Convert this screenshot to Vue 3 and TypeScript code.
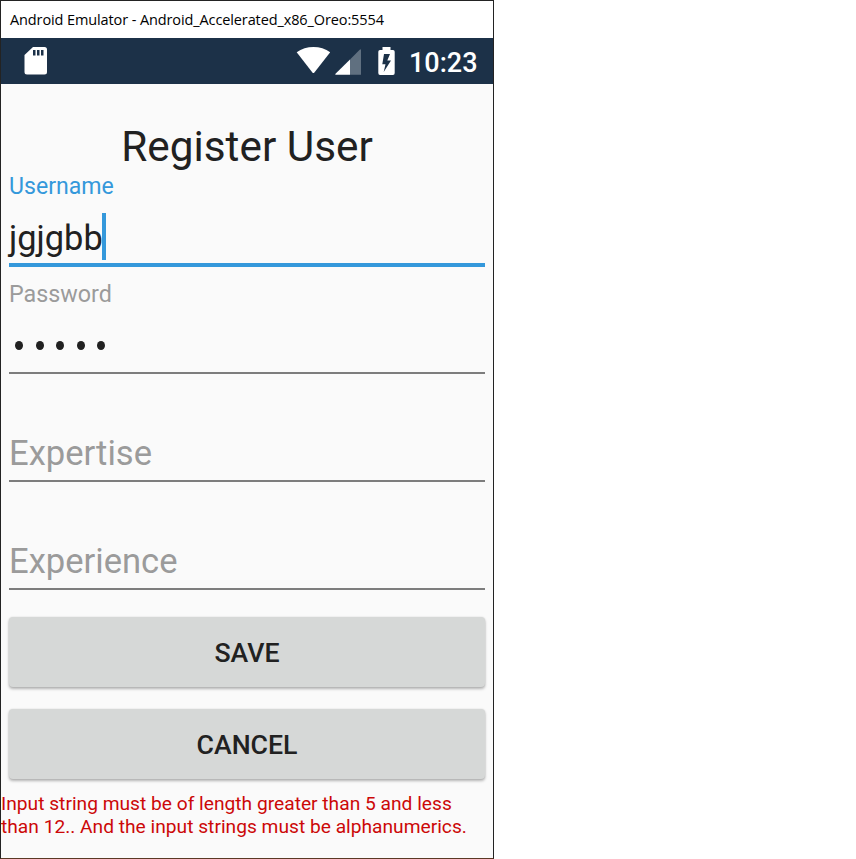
<script setup lang="ts">
import { ref } from 'vue'

interface Field {
  id: string
  label: string
  value: string
  state: 'focused' | 'secret' | 'empty'
}

const title = 'Android Emulator - Android_Accelerated_x86_Oreo:5554'
const fields = ref<Field[]>([
  { id: 'username', label: 'Username', value: 'jgjgbb', state: 'focused' },
  { id: 'password', label: 'Password', value: '•••••', state: 'secret' },
  { id: 'expertise', label: 'Expertise', value: '', state: 'empty' },
  { id: 'experience', label: 'Experience', value: '', state: 'empty' },
])
const errorLines = [
  'Input string must be of length greater than 5 and less',
  'than 12.. And the input strings must be alphanumerics.',
]
</script>

<template>
  <div class="window">
    <header class="titlebar"><span class="caption">{{ title }}</span></header>
    <div class="status">
      <svg class="sd" width="24" height="30" viewBox="0 0 24 30">
        <path fill="#fff" fill-rule="evenodd" d="M9 1H20.5Q23 1 23 3.500V26Q23 28.500 20.500 28.500H3Q.5 28.500 .5 26V9ZM9 4V9.500H11.500V4ZM13 4V9.500H15.500V4ZM17 4V9.500H19.500V4Z" />
      </svg>
      <svg class="signals" width="100" height="32" viewBox="296 46 100 32">
        <path fill="#fff" d="M296.700 52.300C306 45.300 321 45.300 330.200 52.300L314.400 72.600Q313.400 73.600 312.400 72.600Z" />
        <path fill="#607080" d="M361 50Q361 48.500 359.700 49.700L350 59.500V74.800H361Z" />
        <path fill="#fff" d="M350 59.500V74.800H336Q334.500 74.800 335.500 73.700Z" />
        <path fill="#fff" fill-rule="evenodd" d="M382.500 47H390.500V50H393Q394.700 50 394.700 51.700V73Q394.700 74.900 393 74.900H380Q378.300 74.900 378.300 73V51.700Q378.300 50 380 50H382.500ZM384 54L382.300 64.300H385.500L383.700 72L391 60.500H387.300L390 54Z" />
      </svg>
      <span class="clock">10:23</span>
    </div>
    <main class="screen">
      <h1 class="heading"><span>Register User</span></h1>
      <div v-for="f in fields" :key="f.id" class="field" :class="[f.state, f.id]">
        <div class="label"><span v-if="f.value">{{ f.label }}</span></div>
        <div class="entry">
          <span v-if="f.state === 'secret'" class="dots"><i v-for="n in f.value.length" :key="n" class="dot"></i></span>
          <span v-else class="text">{{ f.value || f.label }}</span>
          <span v-if="f.state === 'focused'" class="caret"></span>
        </div>
        <div class="rule"></div>
      </div>
      <div class="actions">
        <button type="button" class="btn save">SAVE</button>
        <button type="button" class="btn cancel">CANCEL</button>
      </div>
      <p class="error"><span v-for="(line, i) in errorLines" :key="i" class="line">{{ line }}</span></p>
    </main>
  </div>
</template>

<style>
body {
  margin: 0;
  background: #fff;
}
</style>

<style scoped>
.window {
  box-sizing: border-box;
  width: 494px;
  height: 859px;
  border: 1px solid #232323;
  border-bottom-color: #5a3825;
  background: #fafafa;
  font-family: Roboto, sans-serif;
  color: #212121;
  overflow: hidden;
}
.titlebar {
  height: 37px;
  padding-left: 9px;
  background: #fff;
  color: #000;
  font-family: "Open Sans", "Noto Sans", sans-serif;
  font-size: 14.5px;
  line-height: 37px;
  white-space: nowrap;
}
.caption {
  letter-spacing: -0.11px;
}
.status {
  display: flex;
  height: 46px;
  background: #1c3148;
  color: #fff;
}
.sd {
  margin: 8px 0 0 23px;
}
.signals {
  margin: 8px 0 0 248px;
}
.clock {
  margin-left: 13px;
  font-size: 27px;
  font-weight: 500;
  line-height: 50px;
}
.heading {
  margin: 0;
  padding-top: 38px;
  height: 49px;
  text-align: center;
  font-size: 42.300px;
  font-weight: 400;
  line-height: 50px;
}
.field {
  height: 108px;
  padding: 0 8px;
}
.label {
  height: 28px;
  font-size: 23.3px;
  line-height: 30px;
  color: #9b9b9b;
}
.focused .label {
  color: #3498db;
  font-size: 23.1px;
  line-height: 32px;
}
.entry {
  display: flex;
  height: 64px;
  font-size: 34.6px;
  line-height: 76px;
  white-space: nowrap;
}
.focused .entry {
  font-size: 34.4px;
  line-height: 79px;
}
.empty .entry {
  color: #9b9b9b;
}
.caret {
  width: 4px;
  height: 47px;
  margin: 14px 0 0 -1px;
  background: #3498db;
}
.dots {
  display: flex;
  gap: 12.500px;
  padding: 34px 0 0 6px;
}
.dot {
  width: 8px;
  height: 9px;
  border-radius: 50%;
  background: #212121;
}
.rule {
  height: 2px;
  margin-top: 1px;
  background: #7d7d7d;
}
.focused .rule {
  height: 4px;
  margin-top: 0;
  background: #3498db;
}
.actions {
  display: flex;
  flex-direction: column;
  gap: 22px;
  padding: 14px 8px 0;
}
.btn {
  height: 70px;
  padding: 0;
  border: 0;
  border-radius: 4px;
  background: #d6d8d7;
  box-shadow: 0 2px 3px rgba(0, 0, 0, 0.28), 0 0 2px rgba(0, 0, 0, 0.12);
  color: #212121;
  font: 500 26.7px/72px Roboto, sans-serif;
}
.error {
  margin: 14px 0 0;
  font-size: 19.2px;
  line-height: 22.500px;
  color: #cc0808;
}
.line {
  display: block;
  white-space: nowrap;
}
</style>
